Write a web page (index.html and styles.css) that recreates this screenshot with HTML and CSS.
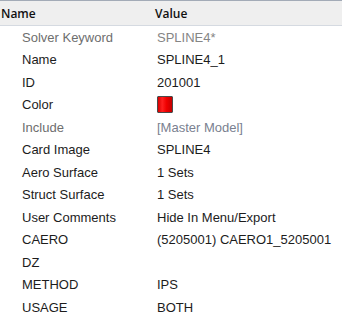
FILE: index.html
```html
<!DOCTYPE html>
<html>
<head>
    <meta charset="utf-8">
    <title>Properties</title>
    <link rel="stylesheet" href="styles.css">
</head>
<body>
    <div class="grid">
        <div class="head">
            <div class="head-name">Name</div>
            <div class="head-value">Value</div>
        </div>
        <div class="row dim"><div class="key">Solver Keyword</div><div class="val">SPLINE4*</div></div>
        <div class="row"><div class="key">Name</div><div class="val">SPLINE4_1</div></div>
        <div class="row"><div class="key">ID</div><div class="val">201001</div></div>
        <div class="row"><div class="key">Color</div><div class="val"><span class="swatch"></span></div></div>
        <div class="row dim"><div class="key">Include</div><div class="val link">[Master Model]</div></div>
        <div class="row"><div class="key">Card Image</div><div class="val">SPLINE4</div></div>
        <div class="row"><div class="key">Aero Surface</div><div class="val">1 Sets</div></div>
        <div class="row"><div class="key">Struct Surface</div><div class="val">1 Sets</div></div>
        <div class="row"><div class="key">User Comments</div><div class="val">Hide In Menu/Export</div></div>
        <div class="row"><div class="key">CAERO</div><div class="val">(5205001) CAERO1_5205001</div></div>
        <div class="row"><div class="key">DZ</div><div class="val"></div></div>
        <div class="row"><div class="key">METHOD</div><div class="val">IPS</div></div>
        <div class="row"><div class="key">USAGE</div><div class="val">BOTH</div></div>
    </div>
</body>
</html>
```

FILE: styles.css
```css
body {
    margin: 0;
    background: #ffffff;
}
.grid {
    width: 349px;
    font-family: "Liberation Sans", Arial, sans-serif;
    font-size: 13px;
    color: #1c1c1c;
}
.head {
    display: flex;
    width: 342px;
    height: 24px;
    align-items: center;
    background-color: #efefef;
    border-top: 1px solid #a3abb7;
    border-bottom: 1px solid #d5dae1;
    font-family: "Open Sans", "Noto Sans", sans-serif;
    font-size: 12px;
    font-weight: 600;
    color: #111111;
}
.head-name {
    width: 154px;
    padding-left: 1px;
}
.row {
    display: flex;
    align-items: center;
    height: 22.5px;
}
.key {
    width: 135px;
    padding-left: 22px;
}
.val {
    display: flex;
    align-items: center;
}
.dim .key {
    color: #6e6e6e;
}
.dim .val {
    color: #858585;
}
.dim .link {
    color: #7a7f90;
}
.swatch {
    display: block;
    width: 14px;
    height: 15px;
    border: 1px solid #4a4a4a;
    border-radius: 1px;
    background: linear-gradient(to right, #d80000 0%, #ff2020 30%, #f00000 60%, #c40000 100%);
}
```
